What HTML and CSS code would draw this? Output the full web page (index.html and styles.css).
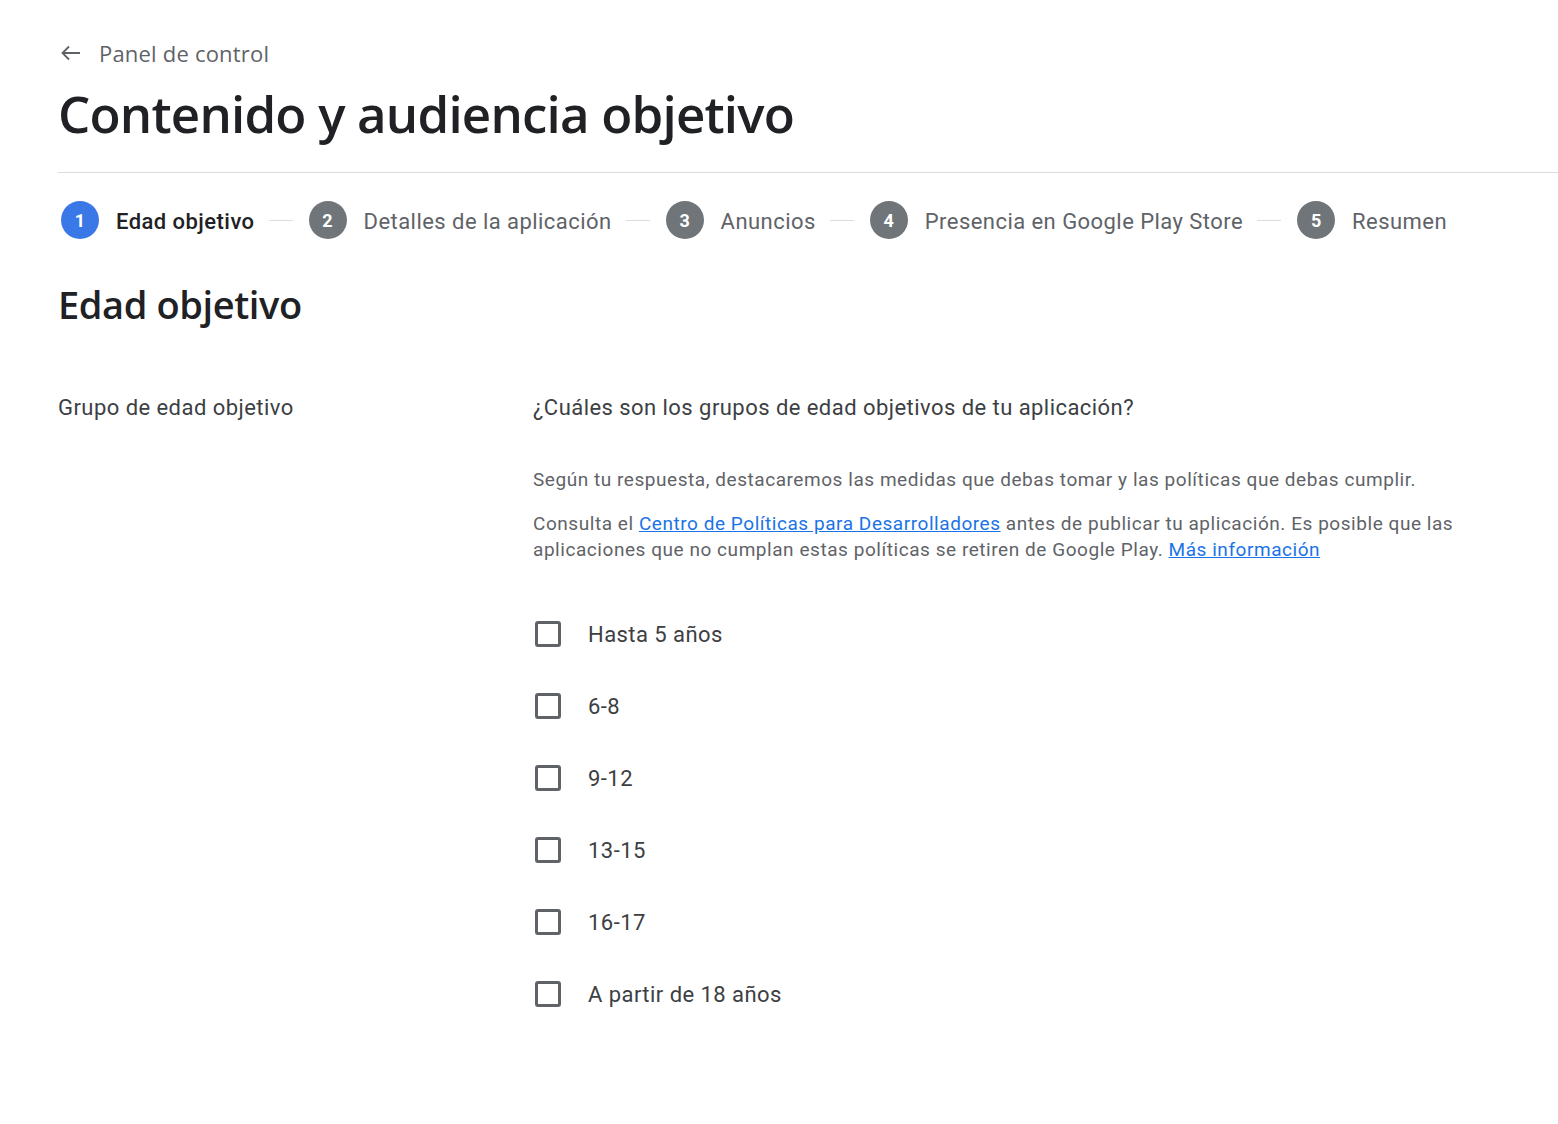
FILE: index.html
```html
<!DOCTYPE html>
<html lang="es">
<head>
  <meta charset="UTF-8">
  <meta name="viewport" content="width=device-width, initial-scale=1.0">
  <title>Contenido y audiencia objetivo</title>
  <link rel="stylesheet" href="styles.css">
</head>
<body>
  <div class="page">
    <a class="back" href="#">
      <svg class="back-icon" viewBox="0 0 24 24" width="24" height="24">
        <path d="M21 12H4M10 5.5L3.5 12 10 18.5" fill="none" stroke="#5f6368" stroke-width="1.8"/>
      </svg>
      <span>Panel de control</span>
    </a>
    <h1 class="title">Contenido y audiencia objetivo</h1>
    <div class="divider"></div>

    <ol class="stepper">
      <li class="step active"><span class="num">1</span><span class="step-label">Edad objetivo</span></li>
      <li class="sep"></li>
      <li class="step"><span class="num">2</span><span class="step-label">Detalles de la aplicación</span></li>
      <li class="sep"></li>
      <li class="step"><span class="num">3</span><span class="step-label">Anuncios</span></li>
      <li class="sep"></li>
      <li class="step"><span class="num">4</span><span class="step-label">Presencia en Google Play Store</span></li>
      <li class="sep"></li>
      <li class="step"><span class="num">5</span><span class="step-label">Resumen</span></li>
    </ol>

    <h2 class="section-title">Edad objetivo</h2>

    <div class="form-row">
      <div class="row-label">Grupo de edad objetivo</div>
      <div class="row-body">
        <div class="question">¿Cuáles son los grupos de edad objetivos de tu aplicación?</div>
        <p class="hint">Según tu respuesta, destacaremos las medidas que debas tomar y las políticas que debas cumplir.</p>
        <p class="hint second">Consulta el <a href="#">Centro de Políticas para Desarrolladores</a> antes de publicar tu aplicación. Es posible que las aplicaciones que no cumplan estas políticas se retiren de Google Play. <a href="#">Más información</a></p>

        <ul class="options">
          <li><label><span class="box"></span>Hasta 5 años</label></li>
          <li><label><span class="box"></span>6-8</label></li>
          <li><label><span class="box"></span>9-12</label></li>
          <li><label><span class="box"></span>13-15</label></li>
          <li><label><span class="box"></span>16-17</label></li>
          <li><label><span class="box"></span>A partir de 18 años</label></li>
        </ul>
      </div>
    </div>
  </div>
</body>
</html>
```

FILE: styles.css
```css
body {
  margin: 0;
  font-family: Roboto, "Liberation Sans", sans-serif;
  color: #202124;
  background: #fff;
  letter-spacing: 0.45px;
}
.page {
  padding: 39px 0 80px 58px;
}
.back {
  display: flex;
  align-items: center;
  gap: 16px;
  height: 28px;
  color: #5f6368;
  text-decoration: none;
  font-family: "Open Sans", Roboto, sans-serif;
  font-size: 22px;
  letter-spacing: 0.2px;
  padding-left: 1px;
}
.back-icon {
  width: 24px;
  height: 24px;
}
.title {
  margin: 14px 0 0;
  font-family: "Open Sans", Roboto, sans-serif;
  font-weight: 600;
  font-size: 51px;
  line-height: 64px;
  letter-spacing: -0.8px;
  color: #202124;
}
.divider {
  height: 1px;
  background: #dadce0;
  margin-top: 27px;
}
.stepper {
  list-style: none;
  margin: 28px 0 0;
  padding: 0 0 0 3px;
  display: flex;
  align-items: center;
  height: 38px;
}
.step {
  display: flex;
  align-items: center;
  gap: 17px;
}
.num {
  width: 38px;
  height: 38px;
  border-radius: 50%;
  background: #70757a;
  color: #fff;
  font-size: 18px;
  font-weight: 700;
  letter-spacing: 0;
  display: flex;
  align-items: center;
  justify-content: center;
}
.step-label {
  font-size: 22px;
  line-height: 28px;
  padding-top: 3px;
  color: #5f6368;
}
.step.active .num {
  background: #3b78e7;
}
.step.active .step-label {
  color: #202124;
  font-weight: 500;
}
.sep {
  width: 24px;
  height: 1px;
  background: #dadce0;
  margin: 0 16px 0 14px;
}
.section-title {
  margin: 41px 0 0;
  font-family: "Open Sans", Roboto, sans-serif;
  font-weight: 600;
  font-size: 38px;
  line-height: 48px;
  letter-spacing: -0.4px;
  color: #202124;
}
.form-row {
  display: grid;
  grid-template-columns: 475px 930px;
  margin-top: 66px;
}
.row-label,
.question {
  font-size: 22px;
  line-height: 28px;
  color: #3c4043;
}
.hint {
  margin: 45px 0 0;
  font-size: 19px;
  line-height: 26px;
  letter-spacing: 0.55px;
  color: #5f6368;
}
.hint.second {
  margin-top: 18px;
}
.hint a {
  color: #1a73e8;
}
.options {
  list-style: none;
  margin: 35px 0 0;
  padding: 0;
}
.options li {
  height: 72px;
  display: flex;
  align-items: center;
}
.options label {
  display: flex;
  align-items: center;
  gap: 27px;
  font-size: 22px;
  color: #3c4043;
}
.box {
  width: 20px;
  height: 20px;
  border: 3px solid #5f6368;
  border-radius: 3px;
  margin-left: 2px;
}
```
